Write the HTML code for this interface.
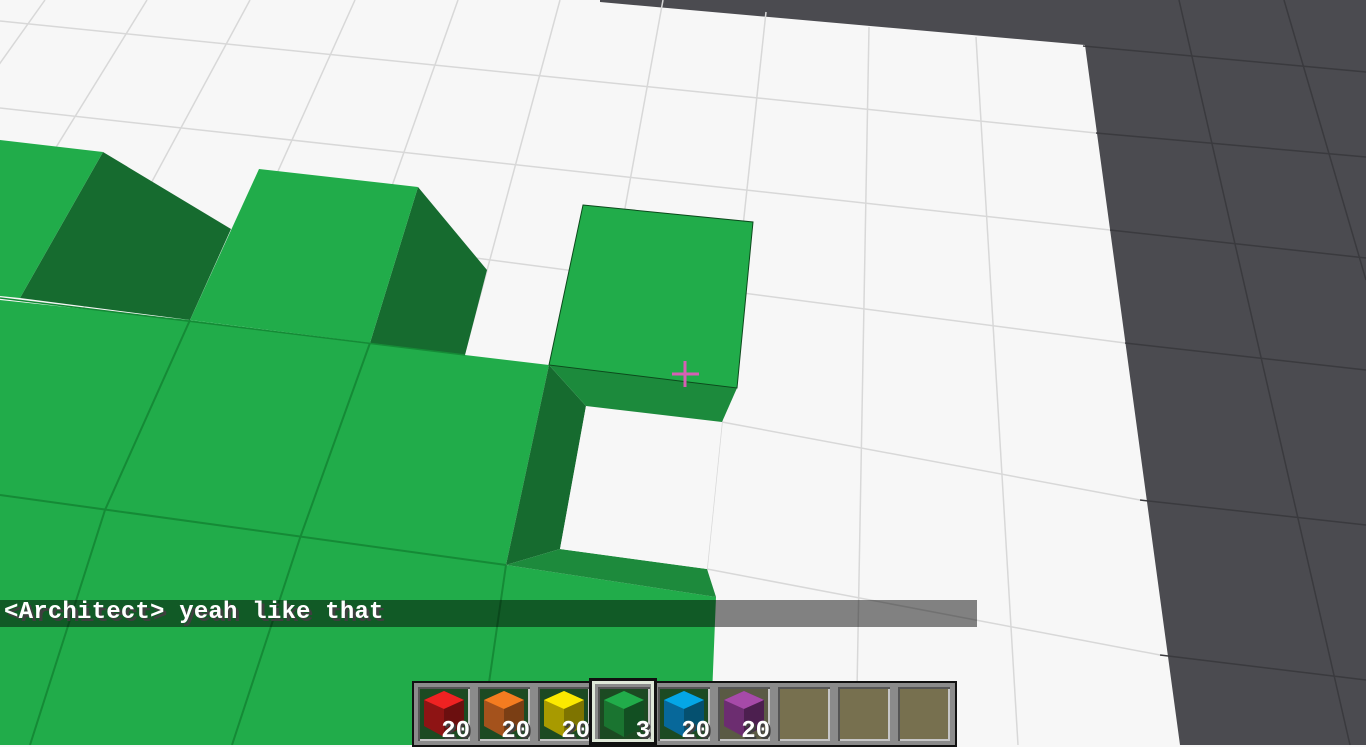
<!DOCTYPE html>
<html><head><style>
html,body{margin:0;padding:0;width:1366px;height:745px;overflow:hidden;background:#f7f7f7}
svg{position:absolute;left:0;top:0}
.chat{position:absolute;left:0;top:600px;width:977px;height:27px;background:rgba(0,0,0,0.48)}
.chat span{position:absolute;left:4px;top:-1px;font:bold 24px "Liberation Mono",monospace;color:#fff;text-shadow:3px 3px 0 #3f3f3f;letter-spacing:0.2px;white-space:pre}
.hb{position:absolute;left:412px;top:681px;width:541px;height:62px;background:#8b8b8b;border:2px solid #111}
.slot{position:absolute;top:4px;width:52px;height:54px;background:#1c4a22;box-shadow:inset 2px 2px 0 #555,inset -2px -2px 0 #c6c6c6}
.slot.e{background:#77704f}
.cnt{position:absolute;right:0;bottom:-4px;font:bold 24px "Liberation Mono",monospace;color:#fff;text-shadow:2px 2px 0 #3f3f3f}
.sel{position:absolute;left:589px;top:678px;width:68px;height:67px;border:3px solid #111;box-sizing:border-box}
.sel div{position:absolute;inset:0;border:3px solid #dfe8d8}
</style></head><body>
<svg width="1366" height="745" viewBox="0 0 1366 745">
<polygon points="600,0 1366,0 1366,745 1180,745 1085,45 600,2" fill="#4b4b50"/>
<g stroke="#3a3a3e" stroke-width="1.5" fill="none">
<line x1="1083" y1="46" x2="1366" y2="72"/><line x1="1096" y1="133" x2="1366" y2="157"/>
<line x1="1110" y1="230" x2="1366" y2="258"/><line x1="1125" y1="343" x2="1366" y2="370"/>
<line x1="1140" y1="500" x2="1366" y2="525"/><line x1="1160" y1="655" x2="1366" y2="680"/>
<line x1="1179" y1="0" x2="1350" y2="745"/><line x1="1284" y1="0" x2="1366" y2="280"/>
</g>
<g stroke="#d8d8d8" stroke-width="1.5" fill="none">
<line x1="0" y1="21" x2="700" y2="92"/><line x1="700" y1="92" x2="1096" y2="133"/>
<line x1="0" y1="108" x2="700" y2="185"/><line x1="700" y1="185" x2="1110" y2="230"/>
<line x1="300" y1="235" x2="1125" y2="343"/>
<line x1="722" y1="422" x2="1140" y2="500"/>
<line x1="707" y1="569" x2="1160" y2="655"/>
<line x1="45" y1="0" x2="-240" y2="400"/><line x1="147" y1="0" x2="-100" y2="400"/>
<line x1="250" y1="0" x2="34" y2="400"/><line x1="355" y1="0" x2="175" y2="400"/>
<line x1="458" y1="0" x2="316" y2="400"/><line x1="560" y1="0" x2="452" y2="400"/>
<line x1="663" y1="0" x2="590" y2="400"/><line x1="766" y1="12" x2="722" y2="422"/>
<line x1="722" y1="422" x2="707" y2="569"/><line x1="707" y1="569" x2="690" y2="745"/>
<line x1="869" y1="27" x2="856" y2="745"/><line x1="976" y1="37" x2="1018" y2="745"/>
</g>
<polygon points="0,300 190,320 370,343 465,355 549,365 506,565 716,597 710,745 0,745" fill="#21ac4a"/>
<g stroke="#158a36" stroke-width="2" fill="none">
<line x1="0" y1="495" x2="506" y2="565"/>
<polyline points="190,320 105,510 30,745"/><polyline points="370,343 300,538 232,745"/>
<polyline points="506,565 480,745"/>
</g>
<polygon points="549,365 586,406 560,549 506,565" fill="#166b2f"/>
<polygon points="506,565 560,549 707,569 716,597" fill="#1d8a3c"/>
<polygon points="586,406 722,422 707,569 560,549" fill="#f7f7f7"/>
<polygon points="549,365 737,388 722,422 586,406" fill="#1c8a3c"/>
<polygon points="583,205 753,222 737,388 549,365" fill="#21ac4a" stroke="#0c4a1c" stroke-width="1"/>
<polygon points="103,152 231,229 190,320 20,298" fill="#166b2f"/>
<polygon points="0,140 103,152 20,298 0,296" fill="#21ac4a"/>
<polygon points="418,187 487,270 465,355 370,343" fill="#166b2f"/>
<polygon points="259,169 418,187 370,343 190,320" fill="#21ac4a"/>
<g stroke="#158a36" stroke-width="1.5"><line x1="0" y1="298" x2="465" y2="355"/></g>
<g stroke="#d65fb4" stroke-width="3"><line x1="672" y1="374" x2="699" y2="374"/><line x1="685" y1="361" x2="685" y2="387"/></g>
</svg>
<div class="chat"><span>&lt;Architect&gt; yeah like that</span></div>
<div class="hb">
<div class="slot" style="left:4px"><svg width="52" height="54"><polygon points="26,4 46,13 46,39 26,50 6,39 6,13" fill="#8e1414"/><polygon points="6,13 26,4 46,13 26,22" fill="#ee2222"/><polygon points="26,22 46,13 46,39 26,50" fill="#6b0f0f"/></svg><span class="cnt">20</span></div>
<div class="slot" style="left:64px"><svg width="52" height="54"><polygon points="26,4 46,13 46,39 26,50 6,39 6,13" fill="#a4521c"/><polygon points="6,13 26,4 46,13 26,22" fill="#f47c20"/><polygon points="26,22 46,13 46,39 26,50" fill="#7a3e14"/></svg><span class="cnt">20</span></div>
<div class="slot" style="left:124px"><svg width="52" height="54"><polygon points="26,4 46,13 46,39 26,50 6,39 6,13" fill="#a89a00"/><polygon points="6,13 26,4 46,13 26,22" fill="#fbe900"/><polygon points="26,22 46,13 46,39 26,50" fill="#7e7400"/></svg><span class="cnt">20</span></div>
<div class="slot" style="left:184px"><svg width="52" height="54"><polygon points="26,4 46,13 46,39 26,50 6,39 6,13" fill="#1a7430"/><polygon points="6,13 26,4 46,13 26,22" fill="#21ac4a"/><polygon points="26,22 46,13 46,39 26,50" fill="#124f22"/></svg><span class="cnt">3</span></div>
<div class="slot" style="left:244px"><svg width="52" height="54"><polygon points="26,4 46,13 46,39 26,50 6,39 6,13" fill="#07689a"/><polygon points="6,13 26,4 46,13 26,22" fill="#04a6e6"/><polygon points="26,22 46,13 46,39 26,50" fill="#05506f"/></svg><span class="cnt">20</span></div>
<div class="slot" style="left:304px;background:#5a5a44"><svg width="52" height="54"><polygon points="26,4 46,13 46,39 26,50 6,39 6,13" fill="#6c2d70"/><polygon points="6,13 26,4 46,13 26,22" fill="#a64aa8"/><polygon points="26,22 46,13 46,39 26,50" fill="#4c1f4f"/></svg><span class="cnt">20</span></div>
<div class="slot e" style="left:364px"></div>
<div class="slot e" style="left:424px"></div>
<div class="slot e" style="left:484px"></div>
</div>
<div class="sel"><div></div></div>
</body></html>
